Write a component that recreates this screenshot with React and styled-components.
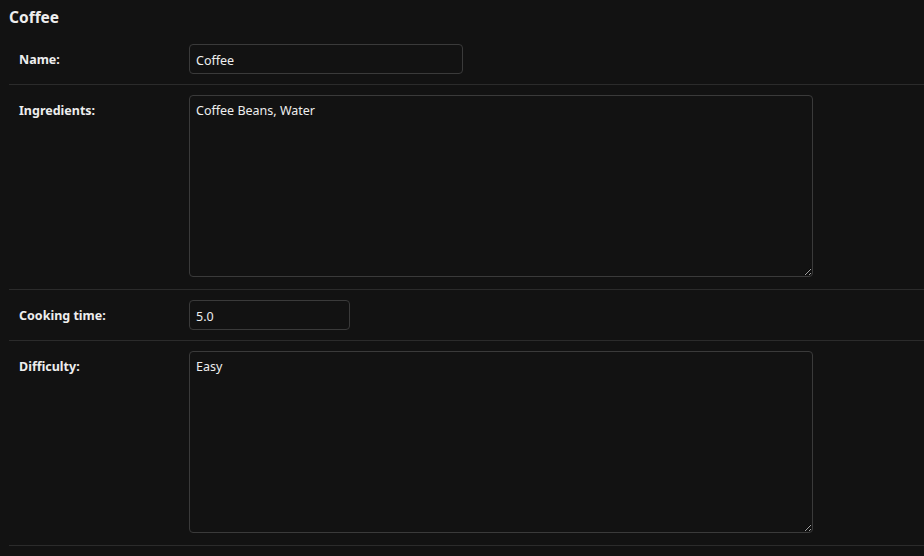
import React from 'react'
import styled, { createGlobalStyle } from 'styled-components'

const colors = {
  bg: '#121212',
  fg: '#eeeeee',
  hairline: '#2b2b2b',
  border: '#3a3a3a',
}

const GlobalStyle = createGlobalStyle`
  html, body {
    margin: 0;
    padding: 0;
    background: ${colors.bg};
    color-scheme: dark;
  }
  body {
    font-family: "Noto Sans", "Open Sans", sans-serif;
    font-size: 13px;
    color: ${colors.fg};
  }
`

const Page = styled.div`
  width: 924px;
  height: 556px;
  background: ${colors.bg};
  overflow: hidden;
`

const Title = styled.h2`
  margin: 0;
  padding: 6px 9px;
  font-size: 15.5px;
  line-height: 22px;
  font-weight: 700;
  color: ${colors.fg};
`

const Fieldset = styled.div`
  margin-left: 9px;
`

const Row = styled.div`
  display: flex;
  align-items: flex-start;
  padding: 10px 10px ${(p) => (p.$tall ? '12px' : '10px')};
  border-bottom: 1px solid ${colors.hairline};
`

const Label = styled.label`
  flex: 0 0 160px;
  padding-right: 10px;
  padding-top: ${(p) => (p.$top ? '6px' : '2px')};
  font-weight: 700;
  font-size: 12.5px;
  line-height: ${(p) => (p.$top ? '20px' : '28px')};
  color: ${colors.fg};
`

const TextInput = styled.input`
  box-sizing: border-box;
  width: ${(p) => p.$width}px;
  height: 30px;
  padding: 6px 6px 4px;
  margin: 0;
  background: ${colors.bg};
  color: ${colors.fg};
  border: 1px solid ${colors.border};
  border-radius: 4px;
  font-family: inherit;
  font-size: 12.5px;
  outline: none;
`

const TextArea = styled.textarea`
  box-sizing: border-box;
  display: block;
  width: 624px;
  height: 182px;
  padding: 6px 6px 4px;
  margin: 0;
  background: ${colors.bg};
  color: ${colors.fg};
  border: 1px solid ${colors.border};
  border-radius: 4px;
  font-family: inherit;
  font-size: 12.5px;
  line-height: 18px;
  outline: none;
  resize: both;
`

export default function App() {
  return (
    <Page>
      <GlobalStyle />
      <Title>Coffee</Title>
      <Fieldset>
        <Row>
          <Label>Name:</Label>
          <TextInput $width={274} defaultValue="Coffee" />
        </Row>
        <Row $tall>
          <Label $top>Ingredients:</Label>
          <TextArea defaultValue="Coffee Beans, Water" />
        </Row>
        <Row>
          <Label>Cooking time:</Label>
          <TextInput $width={161} defaultValue="5.0" />
        </Row>
        <Row $tall>
          <Label $top>Difficulty:</Label>
          <TextArea defaultValue="Easy" />
        </Row>
      </Fieldset>
    </Page>
  )
}
